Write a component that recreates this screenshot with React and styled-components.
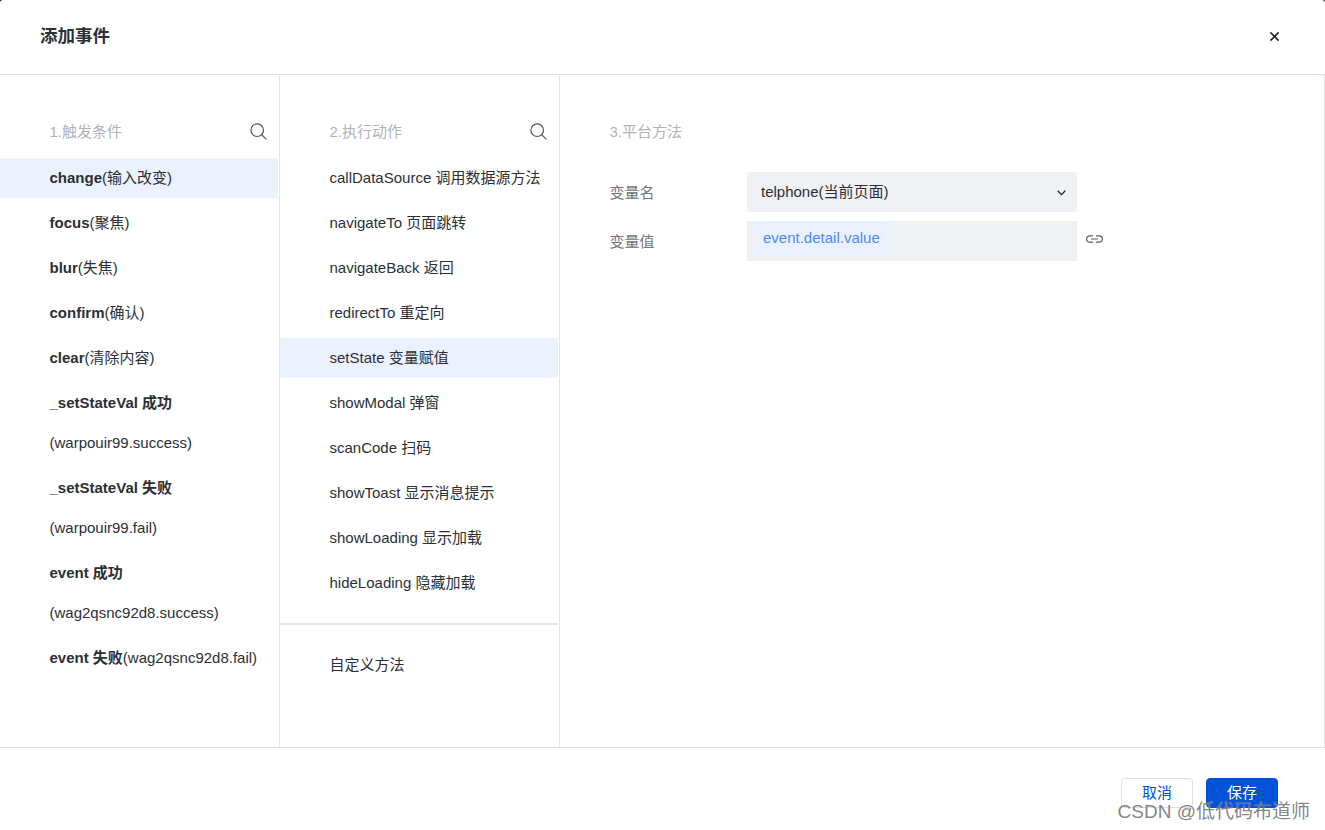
import React from "react";
import styled, { createGlobalStyle } from "styled-components";

const triggers = [
  { bold: "change", rest: "(输入改变)", active: true },
  { bold: "focus", rest: "(聚焦)" },
  { bold: "blur", rest: "(失焦)" },
  { bold: "confirm", rest: "(确认)" },
  { bold: "clear", rest: "(清除内容)" },
  { bold: "_setStateVal 成功", sub: "(warpouir99.success)" },
  { bold: "_setStateVal 失败", sub: "(warpouir99.fail)" },
  { bold: "event 成功", sub: "(wag2qsnc92d8.success)" },
  { bold: "event 失败", rest: "(wag2qsnc92d8.fail)" },
];

const actions = [
  "callDataSource 调用数据源方法",
  "navigateTo 页面跳转",
  "navigateBack 返回",
  "redirectTo 重定向",
  "setState 变量赋值",
  "showModal 弹窗",
  "scanCode 扫码",
  "showToast 显示消息提示",
  "showLoading 显示加载",
  "hideLoading 隐藏加载",
];

const SearchIcon = () => (
  <svg width="17" height="17" viewBox="0 0 17 17" fill="none" stroke="#4f555f" strokeWidth="1.2">
    <circle cx="7.2" cy="7.2" r="6.3" />
    <path d="M11.8 11.8L16.3 16.3" />
  </svg>
);

const App = () => {
  return (
    <Dialog>
      <GlobalStyle />
      <Header>
        <Title>添加事件</Title>
        <CloseIcon viewBox="0 0 12 12" fill="none" stroke="#1f2329" strokeWidth="1.6">
          <path d="M1.5 1.5L10.5 10.5M10.5 1.5L1.5 10.5" />
        </CloseIcon>
      </Header>
      <Body>
        <Column>
          <ColumnHead>
            <ColumnTitle>1.触发条件</ColumnTitle>
            <SearchIcon />
          </ColumnHead>
          {triggers.map((item) => (
            <div key={item.bold}>
              <Item $active={item.active} $flush={!!item.sub}>
                <b>{item.bold}</b>
                {item.rest}
              </Item>
              {item.sub && <Item>{item.sub}</Item>}
            </div>
          ))}
        </Column>
        <Column>
          <ColumnHead>
            <ColumnTitle>2.执行动作</ColumnTitle>
            <SearchIcon />
          </ColumnHead>
          {actions.map((name) => (
            <Item key={name} $active={name.startsWith("setState")}>
              {name}
            </Item>
          ))}
          <Divider />
          <Item>自定义方法</Item>
        </Column>
        <PlatformPane>
          <ColumnHead>
            <ColumnTitle>3.平台方法</ColumnTitle>
          </ColumnHead>
          <FormGrid>
            <FieldLabel>变量名</FieldLabel>
            <SelectBox>
              <SelectText>telphone(当前页面)</SelectText>
              <svg width="9" height="6" viewBox="0 0 9 6" fill="none" stroke="#1f2329" strokeWidth="1.3">
                <path d="M0.7 0.8L4.5 4.6L8.3 0.8" />
              </svg>
            </SelectBox>
            <span />
            <FieldLabel>变量值</FieldLabel>
            <ValueBox>
              <Tag>event.detail.value</Tag>
            </ValueBox>
            <LinkIcon viewBox="0 0 17 8" fill="none" stroke="#555b66" strokeWidth="1.2">
              <path d="M7 0.8H3.8a3.2 3.2 0 0 0 0 6.4H7M10 0.8h3.2a3.2 3.2 0 0 1 0 6.4H10M5 4h7" />
            </LinkIcon>
          </FormGrid>
        </PlatformPane>
      </Body>
      <Footer>
        <CancelButton>取消</CancelButton>
        <SaveButton>保存</SaveButton>
      </Footer>
      <Watermark>CSDN @低代码布道师</Watermark>
    </Dialog>
  );
};

export default App;

const GlobalStyle = createGlobalStyle`
  html, body {
    margin: 0;
    padding: 0;
    background: #222;
  }
  body {
    font-family: "Liberation Sans", "Noto Sans CJK SC", sans-serif;
    font-size: 15px;
    color: #2b2f36;
  }
`;

const Dialog = styled.div`
  position: relative;
  width: 1325px;
  height: 830px;
  overflow: hidden;
  display: flex;
  flex-direction: column;
  background: #fff;
  border-radius: 3px 3px 0 0;
`;

const Header = styled.div`
  height: 75px;
  box-sizing: border-box;
  flex: none;
  display: flex;
  align-items: center;
  justify-content: space-between;
  padding: 0 45px 2px 40px;
  border-bottom: 1px solid #dcdfe8;
`;

const Title = styled.div`
  font-size: 17.5px;
  font-weight: 700;
  margin-top: -3px;
  color: #2b2f36;
`;

const CloseIcon = styled.svg`
  width: 11px;
  height: 11px;
`;

const Body = styled.div`
  height: 672px;
  flex: none;
  display: flex;
  border-bottom: 1px solid #dcdfe8;
`;

const Column = styled.div`
  width: 280px;
  box-sizing: border-box;
  flex: none;
  padding-right: 1px;
  border-right: 1px solid #e3e5ea;
`;

const PlatformPane = styled.div`
  flex: 1;
  border-right: 1px solid #e3e5ea;
`;

const ColumnHead = styled.div`
  height: 83px;
  box-sizing: border-box;
  padding: 47px 11px 0 49.5px;
  display: flex;
  justify-content: space-between;
  align-items: flex-start;

  svg {
    margin-top: 1px;
  }
`;

const ColumnTitle = styled.span`
  font-size: 15px;
  line-height: 20px;
  color: #b0b3ba;
`;

const Item = styled.div`
  height: 40px;
  line-height: 40px;
  margin-bottom: ${(p) => (p.$flush ? "0" : "5px")};
  padding-left: 49.5px;
  font-size: 15px;
  white-space: nowrap;
  color: #2b2f36;
  background: ${(p) => (p.$active ? "#ebf1fd" : "transparent")};

  b {
    font-weight: 700;
  }
`;

const Divider = styled.div`
  height: 2px;
  margin-top: 20px;
  margin-bottom: 20px;
  background: #e3e6ea;
`;

const FormGrid = styled.div`
  display: grid;
  grid-template-columns: 137.5px 330px auto;
  grid-auto-rows: 40px;
  row-gap: 9px;
  padding: 14px 0 0 49.5px;
  align-items: center;
  justify-content: start;
`;

const FieldLabel = styled.span`
  color: #6f7580;
  font-size: 15px;
  margin-top: -2px;
`;

const SelectBox = styled.div`
  height: 40px;
  box-sizing: border-box;
  padding: 0 11px 0 14px;
  display: flex;
  align-items: center;
  justify-content: space-between;
  background: #f0f1f5;
  border-radius: 4px;
  color: #2b2f36;

  svg {
    margin-top: 1px;
  }
`;

const SelectText = styled.span`
  margin-top: -3px;
`;

const ValueBox = styled.div`
  height: 40px;
  background: #f0f1f5;
  display: flex;
`;

const Tag = styled.span`
  height: 35px;
  margin-left: 5px;
  padding: 0 11px;
  line-height: 33px;
  background: #eaf1fd;
  color: #4d8bf5;
`;

const LinkIcon = styled.svg`
  width: 17px;
  height: 8px;
  margin: 0 0 4px 9px;
`;

const Footer = styled.div`
  flex: 1;
  display: flex;
  justify-content: flex-end;
  align-items: flex-start;
  gap: 13px;
  padding: 30px 47px 0 0;
`;

const CancelButton = styled.button`
  width: 72px;
  height: 30px;
  border: 1px solid #dcdfe6;
  border-radius: 4px;
  background: #fff;
  color: #0052d9;
  font: inherit;
  padding: 0 0 3px;
`;

const SaveButton = styled(CancelButton)`
  border-color: #0052d9;
  background: #0052d9;
  color: #fff;
`;

const Watermark = styled.div`
  position: absolute;
  right: 15px;
  bottom: 6px;
  font-size: 19px;
  line-height: 24px;
  color: rgba(100, 100, 100, 0.8);
  text-shadow: 0 0 1px rgba(255, 255, 255, 0.6);
  white-space: nowrap;
`;
